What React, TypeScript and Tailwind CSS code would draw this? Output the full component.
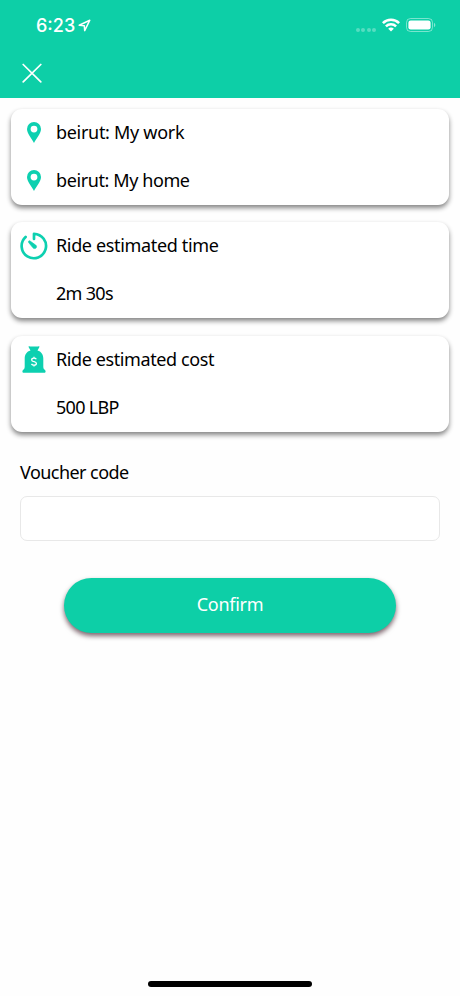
import type { ReactNode } from "react";

interface CardRowProps {
  icon?: ReactNode;
  children: ReactNode;
}

function LocationArrow() {
  return (
    <svg width="13" height="13" viewBox="0 0 13 13" fill="none" className="ml-[3px]">
      <path d="M11.8 1.2 6.7 11.7 6.3 6.7 1.2 6.2Z" stroke="white" strokeWidth="1.5" strokeLinejoin="round" />
    </svg>
  );
}

function WifiIcon() {
  return (
    <svg width="18" height="14" viewBox="0 0 18 14" fill="none" stroke="white">
      <path d="M.9 5.1a11.5 11.5 0 0 1 16.2 0" strokeWidth="2.6" />
      <path d="M3.9 8.3a7.2 7.2 0 0 1 10.2 0" strokeWidth="2.5" />
      <path d="M9 13.6 6.2 10.7a3.9 3.9 0 0 1 5.6 0Z" fill="white" stroke="none" />
    </svg>
  );
}

function BatteryIcon() {
  return (
    <svg width="30" height="14" viewBox="0 0 30 14" fill="none">
      <rect x="0.5" y="0.5" width="26" height="13" rx="4" stroke="white" strokeOpacity="0.45" />
      <rect x="2.4" y="2.4" width="22.2" height="9.2" rx="2.3" fill="white" />
      <path d="M28 4.8c1.8.7 1.8 3.7 0 4.4Z" fill="white" fillOpacity="0.5" />
    </svg>
  );
}

function PinIcon() {
  return (
    <svg width="14" height="21" viewBox="0 0 14 21" fill="#0dd0b0">
      <path
        fillRule="evenodd"
        d="M7 0a7 7 0 0 0-7 7c0 4.9 4.7 9.1 7 14 2.3-4.9 7-9.1 7-14a7 7 0 0 0-7-7Zm0 3.7a3.4 3.4 0 1 1 0 6.8 3.4 3.4 0 0 1 0-6.8Z"
      />
    </svg>
  );
}

function TimerIcon() {
  return (
    <svg width="28" height="28" viewBox="0 0 28 28" fill="none" className="mt-[2px]">
      <path
        d="M5.6 5A12.2 12.2 0 1 0 14 1.8V7"
        stroke="#0dd0b0"
        strokeWidth="2.7"
        strokeLinecap="round"
        strokeLinejoin="round"
      />
      <path
        d="M8.7 9.1c.4-.4.9-.4 1.4-.1l5.6 4.1c2.2 1.8-.1 4.5-2.3 3.1-.3-.2-.5-.4-.7-.7L8.6 10.5c-.3-.5-.3-1 .1-1.4Z"
        fill="#0dd0b0"
        stroke="#0dd0b0"
        strokeWidth="0.6"
      />
    </svg>
  );
}

function MoneyBagIcon() {
  return (
    <svg width="24" height="27" viewBox="0 0 24 27" fill="#0dd0b0" className="mt-[2px]">
      <path d="M7.2.2c1.6.7 3 .2 4.8.2s3.200.5 4.800-.2c.6 0 .8.6.5 1.100L15.500 4.600c3.800 1 5.800 4 5.800 8v7.800c0 1.500.3 2.500 1.500 3.300.5.4.8 1 .8 1.700 0 .9-.5 1.300-1.300 1.300H1.700C.9 26.700.4 26.300.4 25.400c0-.7.3-1.300.8-1.700 1.200-.8 1.500-1.800 1.500-3.300v-7.800c0-4 2-7 5.800-8L6.700 1.300C6.400.8 6.600.2 7.200.2Z" />
      <path
        d="M14.3 13.3c-.4-.8-1.2-1.1-2.3-1.1-1.4 0-2.3.7-2.3 1.7 0 2.5 4.7 1.1 4.7 3.5 0 1-.9 1.7-2.4 1.7-1.2 0-2.1-.4-2.5-1.2M12 10.7v1.5M12 19.1v1.5"
        fill="none"
        stroke="white"
        strokeWidth="1.3"
      />
    </svg>
  );
}

function StatusBar() {
  return (
    <div className="flex h-[50px] items-center pl-[36px] pr-[24px] text-white">
      <span className="pt-px font-['Inter'] text-[18px] font-medium leading-none">6:23</span>
      <LocationArrow />
      <div className="ml-auto flex items-center">
        <div className="mt-[10px] mr-[6px] flex gap-[1.5px]">
          <i className="size-[4px] rounded-full bg-white/30" />
          <i className="size-[4px] rounded-full bg-white/30" />
          <i className="size-[4px] rounded-full bg-white/30" />
          <i className="size-[4px] rounded-full bg-white/30" />
        </div>
        <WifiIcon />
        <div className="ml-[6px]">
          <BatteryIcon />
        </div>
      </div>
    </div>
  );
}

function Card({ children }: { children: ReactNode }) {
  return (
    <section className="h-24 rounded-[11px] bg-white shadow-[0_3px_5px_rgba(0,0,0,0.48)]">
      {children}
    </section>
  );
}

function CardRow({ icon, children }: CardRowProps) {
  return (
    <div className="flex h-12 items-center pb-[2px]">
      <div className="flex w-[45px] shrink-0 justify-center">{icon}</div>
      <span className="whitespace-nowrap">{children}</span>
    </div>
  );
}

export default function App() {
  return (
    <div className="flex h-[996px] w-[460px] flex-col overflow-hidden bg-[#fefefe] font-['Noto_Sans',sans-serif] text-[18px] leading-6 text-black">
      <header className="h-[98px] shrink-0 bg-[#0dcfa7]">
        <StatusBar />
        <button aria-label="Close" className="ml-[22px] mt-[13px] block">
          <svg width="20" height="20" viewBox="0 0 20 20" stroke="white" strokeWidth="1.7" strokeLinecap="round">
            <path d="m1.2 1.5 17.6 17.3M18.8 1.5 1.2 18.8" />
          </svg>
        </button>
      </header>

      <main className="flex flex-col pt-[11px]">
        <div className="flex flex-col gap-[17.3px] px-[11px]">
          <Card>
            <CardRow icon={<PinIcon />}>
              <span className="tracking-[-0.3px]">beirut: My work</span>
            </CardRow>
            <CardRow icon={<PinIcon />}>
              <span className="tracking-[-0.4px]">beirut: My home</span>
            </CardRow>
          </Card>
          <Card>
            <CardRow icon={<TimerIcon />}>
              <span className="tracking-[-0.35px]">Ride estimated time</span>
            </CardRow>
            <CardRow>
              <span className="tracking-[-0.7px]">2m 30s</span>
            </CardRow>
          </Card>
          <Card>
            <CardRow icon={<MoneyBagIcon />}>
              <span className="tracking-[-0.4px]">Ride estimated cost</span>
            </CardRow>
            <CardRow>
              <span className="tracking-[-0.7px]">500 LBP</span>
            </CardRow>
          </Card>
        </div>

        <label className="mt-[28.4px] block px-[20px]">
          <span className="block tracking-[-0.55px]">Voucher code</span>
          <input className="mt-[12px] block h-[45px] w-full rounded-[7px] border border-[#e8e8e8] bg-white px-3 outline-none" />
        </label>

        <button className="mx-auto mt-[37px] h-[55px] w-[332px] rounded-full bg-[#0dcfa7] pb-[2px] tracking-[-0.3px] text-white shadow-[0_3px_5px_rgba(40,0,15,0.6)]">
          Confirm
        </button>
      </main>

      <div className="mx-auto mt-auto mb-[9px] h-[6px] w-[164px] shrink-0 rounded-full bg-black" />
    </div>
  );
}
